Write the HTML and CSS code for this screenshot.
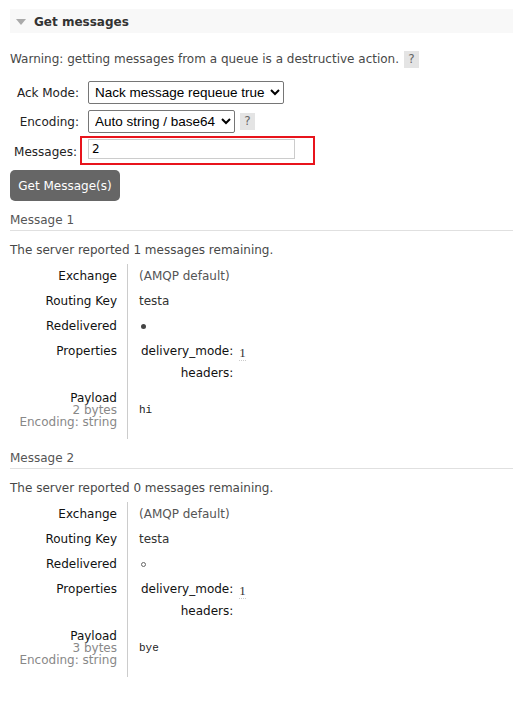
FILE: index.html
```html
<!DOCTYPE html>
<html>
<head>
<meta charset="utf-8">
<link rel="stylesheet" href="styles.css">
</head>
<body>
<div class="section">
  <h2 class="section-h"><span class="tri"></span>Get messages</h2>
  <div class="hider">
    <p class="warn">Warning: getting messages from a queue is a destructive action. <span class="help">?</span></p>
    <div class="form">
      <label class="lbl">Ack Mode:</label>
      <div class="ctl">
        <select class="sel">
          <option>Nack message requeue true</option>
        </select>
      </div>
      <label class="lbl">Encoding:</label>
      <div class="ctl">
        <select class="sel">
          <option>Auto string / base64</option>
        </select>
        <span class="help">?</span>
      </div>
      <label class="lbl low">Messages:</label>
      <div class="ctl mark">
        <input class="inp" type="text" value="2">
      </div>
    </div>
    <button class="btn">Get Message(s)</button>

    <div class="msg">
      <h3 class="msg-h">Message 1</h3>
      <p class="remain">The server reported 1 messages remaining.</p>
      <div class="facts">
        <div class="k">Exchange</div><div class="v grey">(AMQP default)</div>
        <div class="k">Routing Key</div><div class="v">testa</div>
        <div class="k">Redelivered</div><div class="v"><span class="dot full"></span></div>
        <div class="k">Properties</div>
        <div class="v">
          <div class="props">
            <div class="pk">delivery_mode:</div><div class="pv"><abbr>1</abbr></div>
            <div class="pk">headers:</div><div class="pv"></div>
          </div>
        </div>
        <div class="k payload">Payload<br><span class="sub">2 bytes<br>Encoding: string</span></div>
        <div class="v pay"><pre>hi</pre></div>
      </div>
    </div>

    <div class="msg">
      <h3 class="msg-h">Message 2</h3>
      <p class="remain">The server reported 0 messages remaining.</p>
      <div class="facts">
        <div class="k">Exchange</div><div class="v grey">(AMQP default)</div>
        <div class="k">Routing Key</div><div class="v">testa</div>
        <div class="k">Redelivered</div><div class="v"><span class="dot empty"></span></div>
        <div class="k">Properties</div>
        <div class="v">
          <div class="props">
            <div class="pk">delivery_mode:</div><div class="pv"><abbr>1</abbr></div>
            <div class="pk">headers:</div><div class="pv"></div>
          </div>
        </div>
        <div class="k payload">Payload<br><span class="sub">3 bytes<br>Encoding: string</span></div>
        <div class="v pay"><pre>bye</pre></div>
      </div>
    </div>
  </div>
</div>
</body>
</html>
```

FILE: styles.css
```css
* { box-sizing: border-box; }
html, body { margin: 0; padding: 0; background: #fff; }
body {
  font-family: "DejaVu Sans", Verdana, sans-serif;
  font-size: 12px;
  color: #484848;
  padding: 9px 0 0 10px;
}
.section-h {
  margin: 0;
  height: 24px;
  background: #f8f8f8;
  font-size: 12px;
  font-weight: bold;
  color: #333;
  display: flex;
  align-items: center;
  padding-left: 6px;
  padding-top: 2px;
}
.tri {
  width: 0; height: 0;
  border-left: 5px solid transparent;
  border-right: 5px solid transparent;
  border-top: 6px solid #aaa;
  margin-right: 8px;
  margin-top: -1px;
}
.hider { padding-top: 17px; }
.warn { margin: 0; line-height: 18px; display: flex; align-items: center; }
.help {
  display: inline-block;
  background: #e4e4e4;
  color: #666;
  width: 15px; height: 17px;
  line-height: 17px;
  text-align: center;
  margin-left: 5px;
  font-size: 12px;
}
.form {
  display: grid;
  grid-template-columns: 70px auto;
  column-gap: 8px;
  row-gap: 6px;
  margin-top: 13px;
  align-items: center;
}
.lbl { text-align: right; color: #222; padding-right: 1px; }
.lbl.low { padding-top: 5px; padding-right: 3px; }
.ctl { display: flex; align-items: center; }
.ctl .help { margin-left: 5px; }
.sel {
  font-family: "Liberation Sans", Arial, sans-serif;
  font-size: 13.5px;
  height: 23px;
  border: 1px solid #767676;
  border-radius: 2px;
  background: #fff;
  color: #000;
  padding: 0 2px;
}
.mark { position: relative; }
.mark::after {
  content: "";
  position: absolute;
  left: -8px; top: -3px;
  width: 231px; height: 25px;
  border: 2px solid #e8141c;
  pointer-events: none;
}
.inp {
  width: 207px; height: 20px;
  border: 1px solid #ccc;
  font-family: "DejaVu Sans", sans-serif;
  font-size: 12px;
  padding: 0 3px;
  color: #000;
  outline: none;
}
.btn {
  margin-top: 11px;
  display: block;
  background: #666;
  color: #fff;
  border: 0;
  border-radius: 5px;
  width: 110px; height: 31px;
  font-family: "DejaVu Sans", sans-serif;
  font-size: 12px;
  padding: 0;
}
.msg-h {
  margin: 11px 0 0;
  font-weight: normal;
  font-size: 12px;
  color: #555;
  padding-bottom: 2px;
  border-bottom: 1px solid #e0e0e0;
  line-height: 16px;
}
.remain { margin: 11px 0 0; line-height: 16px; }
.facts {
  display: grid;
  grid-template-columns: 118px 1fr;
  margin-top: 6px;
}
.k {
  text-align: right;
  color: #111;
  padding: 4px 10px 4px 0;
  line-height: 17px;
  border-right: 1px solid #ccc;
}
.v { padding: 4px 0 4px 11px; line-height: 17px; color: #333; }
.v.grey { color: #555; }
.dot { display: inline-block; width: 5px; height: 5px; border-radius: 50%; vertical-align: middle; margin-left: 2px; }
.dot.full { background: #444; }
.dot.empty { border: 1px solid #666; }
.props {
  display: grid;
  grid-template-columns: max-content auto;
  column-gap: 6px;
  row-gap: 4px;
  color: #111;
  padding-left: 2px;
}
.pk { text-align: right; }
.pv { font-family: "Liberation Serif", serif; font-size: 13px; color: #333; padding-top: 1px; }
abbr { text-decoration: none; border-bottom: 1px dotted #ccc; }
.payload { padding-top: 6px; padding-bottom: 11px; line-height: 12px; }
.sub { color: #888; }
.pay { padding-top: 16px; }
pre { margin: 0; font-family: "Liberation Mono", monospace; font-size: 11px; color: #222; }
```
